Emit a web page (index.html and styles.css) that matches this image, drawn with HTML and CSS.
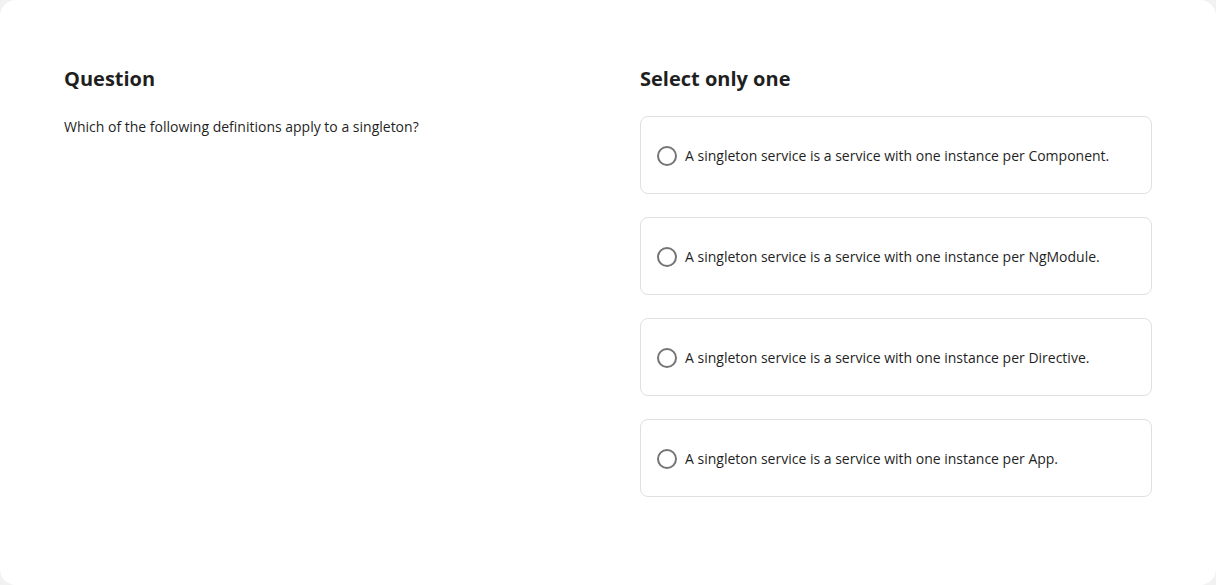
FILE: index.html
```html
<!DOCTYPE html>
<html>
<head>
<meta charset="utf-8">
<link rel="stylesheet" href="styles.css">
</head>
<body>
<main class="card">
  <section class="col">
    <h2 class="title">Question</h2>
    <p class="question">Which of the following definitions apply to a singleton?</p>
  </section>
  <section class="col">
    <h2 class="title title-options">Select only one</h2>
    <div class="options">
      <label class="option"><span class="radio"></span><span class="label">A singleton service is a service with one instance per Component.</span></label>
      <label class="option"><span class="radio"></span><span class="label">A singleton service is a service with one instance per NgModule.</span></label>
      <label class="option"><span class="radio"></span><span class="label">A singleton service is a service with one instance per Directive.</span></label>
      <label class="option"><span class="radio"></span><span class="label">A singleton service is a service with one instance per App.</span></label>
    </div>
  </section>
</main>
</body>
</html>
```
FILE: styles.css
```css
* { box-sizing: border-box; }
html, body { margin: 0; height: 100%; }
body {
  background: #f2f2f2;
  font-family: "Open Sans", "Noto Sans", sans-serif;
  color: #1f1f1f;
}
.card {
  height: 585px;
  background: #fff;
  border-radius: 16px;
  padding: 65px 64px 64px;
  display: grid;
  grid-template-columns: 512px 512px;
  column-gap: 64px;
  align-items: start;
}
.title {
  margin: 0 0 24px;
  font-size: 20px;
  line-height: 28px;
  font-weight: 700;
  color: #1f1f1f;
}
.title-options {
  margin-bottom: 23px;
}
.question {
  margin: 0;
  font-size: 14px;
  line-height: 20px;
}
.options {
  display: flex;
  flex-direction: column;
  gap: 23px;
}
.option {
  height: 78px;
  border: 1px solid #e0e0e0;
  border-radius: 8px;
  padding: 1px 16px 0;
  display: flex;
  align-items: center;
  gap: 8px;
  font-size: 14px;
  line-height: 20px;
}
.radio {
  width: 20px;
  height: 20px;
  border: 2px solid #757575;
  border-radius: 50%;
  flex: none;
}
```
